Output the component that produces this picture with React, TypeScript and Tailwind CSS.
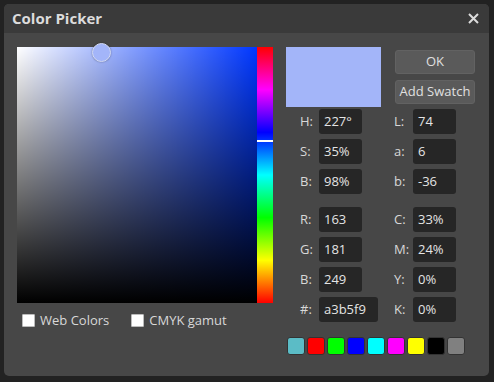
const font = { fontFamily: '"Open Sans", "Liberation Sans", sans-serif' };

const swatches = ['#5bbcc6', '#ff0000', '#00ff00', '#0000ff', '#00ffff', '#ff00ff', '#ffff00', '#000000', '#808080'];

function Field({ label, value, wide, gap }: { label: string; value: string; wide?: boolean; gap?: boolean }) {
  return (
    <div className={`flex items-center ${gap ? 'w-[94px]' : ''}`}>
      <span className="w-[19px] text-[13px] text-[#d8d8d8]">{label}</span>
      <div
        className={`h-[25px] ${wide ? 'w-[59px]' : 'w-[43px]'} rounded-[3px] bg-[#262626] pl-[5px] text-[13px] leading-[25px] text-[#e4e4e4]`}
      >
        {value}
      </div>
    </div>
  );
}

function Row({ l, r }: { l: [string, string, boolean?]; r: [string, string] }) {
  return (
    <div className="flex h-[25px] items-center pl-[14px]">
      <Field label={l[0]} value={l[1]} wide={l[2]} gap />
      <Field label={r[0]} value={r[1]} />
    </div>
  );
}

function Check({ label }: { label: string }) {
  return (
    <div className="flex items-center gap-[5px]">
      <div className="h-[13px] w-[13px] rounded-[1px] border border-[#bbb] bg-white" />
      <span className="text-[13px] text-[#d8d8d8]">{label}</span>
    </div>
  );
}

export default function App() {
  return (
    <div className="min-h-screen bg-[#222222] pt-[4px] pl-[4px]" style={font}>
      <div className="h-[372px] w-[485px] overflow-hidden rounded-[5px] bg-[#474747]">
        {/* Title bar */}
        <div className="flex h-[29px] items-center justify-between bg-[#3a3a3a] pl-[8px] pr-[10px]">
          <span className="text-[15px] font-bold text-[#dcdcdc]">Color Picker</span>
          <svg width="11" height="11" viewBox="0 0 11 11">
            <path d="M1 1L10 10M10 1L1 10" stroke="#dcdcdc" strokeWidth="2" />
          </svg>
        </div>

        <div className="flex pl-[13px] pt-[14px]">
          {/* Left: picker */}
          <div className="flex flex-col">
            <div className="flex">
              <div className="relative h-[256px] w-[240px] bg-[#0037ff]">
                <div className="h-full w-full bg-[linear-gradient(to_right,#ffffff,rgba(255,255,255,0))]">
                  <div className="h-full w-full bg-[linear-gradient(to_top,#000000,rgba(0,0,0,0))]" />
                </div>
                <div className="absolute left-[75px] top-[-4px] h-[19px] w-[19px] rounded-full border border-[#d4dbf5] bg-[#a3b5f9] shadow-[0_0_2px_rgba(0,0,0,0.4)]" />
              </div>
              <div className="relative h-[256px] w-[16px] bg-[linear-gradient(to_bottom,#ff0000,#ff00ff,#0000ff,#00ffff,#00ff00,#ffff00,#ff0000)]">
                <div className="absolute left-0 top-[93px] h-[2px] w-full bg-white" />
              </div>
            </div>
            <div className="mt-[8px] flex gap-[22px] pl-[5px]">
              <Check label="Web Colors" />
              <Check label="CMYK gamut" />
            </div>
          </div>

          {/* Right: values */}
          <div className="ml-[13px] flex flex-col">
            <div className="flex">
              <div className="h-[60px] w-[95px] bg-[#a3b5f9]" />
              <div className="ml-[14px] mt-[3px] flex flex-col gap-[6px]">
                <button className="h-[24px] w-[80px] rounded-[3px] border border-[#626262] bg-[#5a5a5a] text-[13px] text-[#e0e0e0]">
                  OK
                </button>
                <button className="h-[24px] w-[80px] rounded-[3px] border border-[#626262] bg-[#5a5a5a] text-[13px] text-[#e0e0e0]">
                  Add Swatch
                </button>
              </div>
            </div>

            <div className="mt-[2px] flex flex-col gap-[5px]">
              <Row l={['H:', '227°']} r={['L:', '74']} />
              <Row l={['S:', '35%']} r={['a:', '6']} />
              <Row l={['B:', '98%']} r={['b:', '-36']} />
            </div>
            <div className="mt-[13px] flex flex-col gap-[5px]">
              <Row l={['R:', '163']} r={['C:', '33%']} />
              <Row l={['G:', '181']} r={['M:', '24%']} />
              <Row l={['B:', '249']} r={['Y:', '0%']} />
              <Row l={['#:', 'a3b5f9', true]} r={['K:', '0%']} />
            </div>

            <div className="mt-[15px] flex gap-[2px] pl-[1px]">
              {swatches.map((c) => (
                <div
                  key={c}
                  className="h-[18px] w-[18px] rounded-[3px] border border-[#333]"
                  style={{ backgroundColor: c }}
                />
              ))}
            </div>
          </div>
        </div>
      </div>
    </div>
  );
}
